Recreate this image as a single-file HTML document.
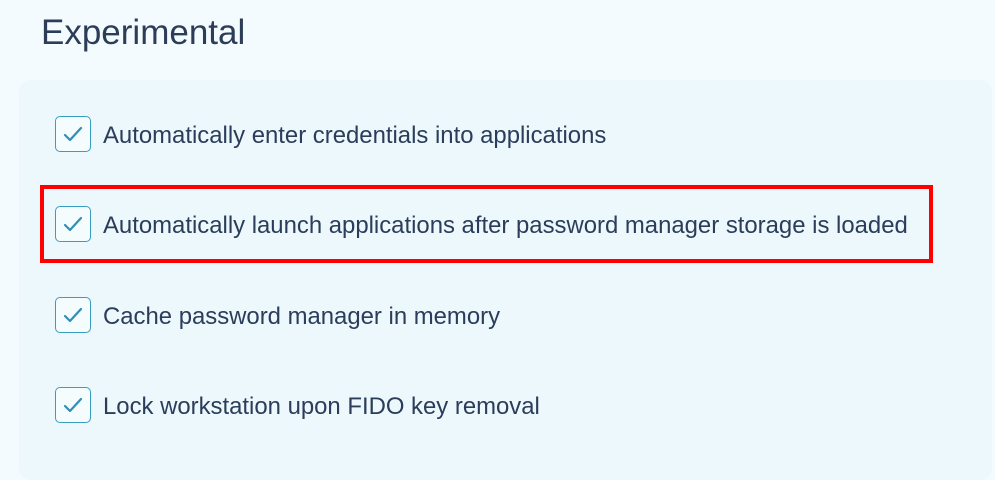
<!DOCTYPE html>
<html><head><style>
body{margin:0;width:995px;height:445px;background:#f3fbfe;font-family:"Liberation Sans",sans-serif;overflow:hidden;position:relative}
h1{position:absolute;left:41px;top:13px;margin:0;font-weight:normal;font-size:35px;color:#2b3d57}
.panel{position:absolute;left:19px;top:80px;width:973px;height:400px;background:#ecf8fc;border-radius:12px}
.row{position:absolute;left:55px;height:36px;display:flex;align-items:center}
.cb{border:1.5px solid #3a9cbf;border-radius:5px;box-sizing:border-box;width:36px;height:36px;background:#f5fcfe;display:flex;align-items:center;justify-content:center}
.t{margin-left:12px;font-size:23.9px;color:#2b3d5a;white-space:nowrap;position:relative;top:2px}
.red{position:absolute;left:40px;top:185px;width:885px;height:70px;border:4px solid #fe0000}
</style></head><body>
<h1>Experimental</h1>
<div class="panel"></div>
<div class="red"></div>
<div class="row" style="top:116px"><div class="cb"><svg width="22" height="22" viewBox="0 0 22 22"><path d="M3 12l5 5L19 5" fill="none" stroke="#2f8fb5" stroke-width="2.2" stroke-linecap="round" stroke-linejoin="round"/></svg></div><span class="t">Automatically enter credentials into applications</span></div>
<div class="row" style="top:206px"><div class="cb"><svg width="22" height="22" viewBox="0 0 22 22"><path d="M3 12l5 5L19 5" fill="none" stroke="#2f8fb5" stroke-width="2.2" stroke-linecap="round" stroke-linejoin="round"/></svg></div><span class="t">Automatically launch applications after password manager storage is loaded</span></div>
<div class="row" style="top:297px"><div class="cb"><svg width="22" height="22" viewBox="0 0 22 22"><path d="M3 12l5 5L19 5" fill="none" stroke="#2f8fb5" stroke-width="2.2" stroke-linecap="round" stroke-linejoin="round"/></svg></div><span class="t">Cache password manager in memory</span></div>
<div class="row" style="top:387px"><div class="cb"><svg width="22" height="22" viewBox="0 0 22 22"><path d="M3 12l5 5L19 5" fill="none" stroke="#2f8fb5" stroke-width="2.2" stroke-linecap="round" stroke-linejoin="round"/></svg></div><span class="t">Lock workstation upon FIDO key removal</span></div>
</body></html>
